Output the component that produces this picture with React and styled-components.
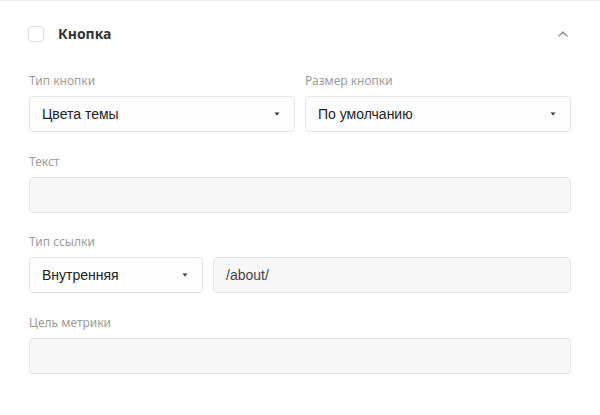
import styled, { createGlobalStyle } from "styled-components";

const GlobalStyle = createGlobalStyle`
  html, body {
    margin: 0;
    padding: 0;
    background: #ffffff;
  }
  body {
    font-family: "Noto Sans", "Liberation Sans", Arial, sans-serif;
  }
  * {
    box-sizing: border-box;
  }
`;

const Panel = styled.section`
  width: 600px;
  min-height: 415px;
  border-top: 1px solid #ececec;
  padding: 25px 29px 0 28px;
`;

const Header = styled.div`
  display: flex;
  align-items: center;
  height: 16px;
  margin-bottom: 31px;
`;

const Checkbox = styled.span`
  width: 16px;
  height: 16px;
  border: 1px solid #dedede;
  border-radius: 4px;
  background: #fff;
  flex-shrink: 0;
`;

const Title = styled.h3`
  margin: 0 0 0 14px;
  font-size: 14px;
  font-weight: 700;
  color: #333;
  flex: 1;
  line-height: 16px;
`;

const Toggle = styled.button`
  border: 0;
  background: none;
  padding: 0;
  width: 16px;
  height: 16px;
  display: flex;
  align-items: center;
  justify-content: center;
  color: #9a9a9a;
  cursor: pointer;
`;

const Fields = styled.div`
  display: flex;
  flex-direction: column;
  gap: 21.5px;
  padding-left: 1px;
`;

const Row = styled.div`
  display: grid;
  grid-template-columns: ${(p) => p.$cols || "1fr 1fr"};
  gap: 10px;
`;

const Field = styled.div`
  display: flex;
  flex-direction: column;
`;

const Label = styled.label`
  font-size: 12px;
  line-height: 16px;
  color: #9b9b9b;
  margin-bottom: 7px;
`;

const SelectBox = styled.div`
  height: 36px;
  display: flex;
  align-items: center;
  justify-content: space-between;
  padding: 0 14px 0 12px;
  border: 1px solid #e4e4e4;
  border-radius: 4px;
  background: #fdfdfd;
  font-family: "Liberation Sans", Arial, sans-serif;
  font-size: 14px;
  color: #222;
  cursor: pointer;
`;

const Input = styled.input`
  height: 36px;
  width: 100%;
  padding: 0 12px;
  border: 1px solid #e4e4e4;
  border-radius: 4px;
  background: #f7f7f7;
  font-family: "Liberation Sans", Arial, sans-serif;
  font-size: 14px;
  color: #444;
  outline: none;
`;

function Caret() {
  return (
    <svg width="6" height="4" viewBox="0 0 6 4">
      <path d="M0.5 0.5 H5.5 L3 3.5 Z" fill="#333" />
    </svg>
  );
}

function Select({ value }) {
  return (
    <SelectBox>
      <span>{value}</span>
      <Caret />
    </SelectBox>
  );
}

export default function App() {
  return (
    <>
      <GlobalStyle />
      <Panel>
        <Header>
          <Checkbox />
          <Title>Кнопка</Title>
          <Toggle aria-label="Свернуть">
            <svg width="10" height="6" viewBox="0 0 10 6" fill="none">
              <path
                d="M1 5 L5 1.2 L9 5"
                stroke="currentColor"
                strokeWidth="1.6"
                strokeLinecap="round"
                strokeLinejoin="round"
              />
            </svg>
          </Toggle>
        </Header>

        <Fields>
          <Row>
            <Field>
              <Label>Тип кнопки</Label>
              <Select value="Цвета темы" />
            </Field>
            <Field>
              <Label>Размер кнопки</Label>
              <Select value="По умолчанию" />
            </Field>
          </Row>

          <Field>
            <Label>Текст</Label>
            <Input />
          </Field>

          <Field>
            <Label>Тип ссылки</Label>
            <Row $cols="174px 1fr">
              <Select value="Внутренняя" />
              <Input defaultValue="/about/" />
            </Row>
          </Field>

          <Field>
            <Label>Цель метрики</Label>
            <Input />
          </Field>
        </Fields>
      </Panel>
    </>
  );
}
